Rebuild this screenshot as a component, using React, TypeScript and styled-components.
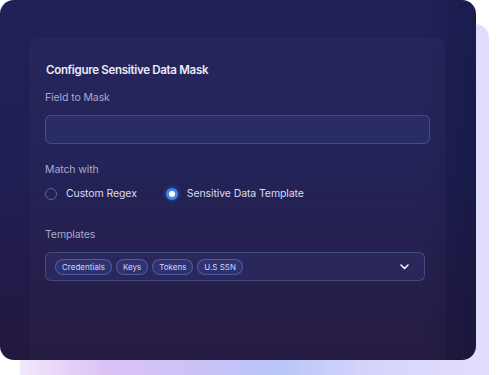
import styled, { createGlobalStyle } from 'styled-components'

const GlobalStyle = createGlobalStyle`
  html, body {
    margin: 0;
    padding: 0;
    background: #ffffff;
    font-family: Inter, "Noto Sans", sans-serif;
  }
`

const Page = styled.div`
  width: 500px;
  height: 375px;
  overflow: hidden;
  position: relative;
  background: #ffffff;
`

const Card = styled.div`
  position: relative;
  width: 476px;
  height: 360px;
  border-radius: 14px;
  background:
    linear-gradient(90deg, rgba(0, 0, 0, 0) 88%, rgba(10, 20, 50, 0.35) 100%),
    linear-gradient(180deg, #21215a 0%, #1f1f55 45%, #221a47 80%, #23183f 100%);
  display: flex;
  padding: 38px 31px 0 30px;
  box-sizing: border-box;

  &::before {
    content: '';
    position: absolute;
    left: 20px;
    top: 24px;
    width: 469px;
    height: 380px;
    border-radius: 14px;
    z-index: -1;
    background: linear-gradient(
      90deg,
      #f2e8fb 0%,
      #dcc2f5 18%,
      #c9c2f7 40%,
      #b9c6f8 55%,
      #d6d4fb 75%,
      #e2defc 100%
    );
  }
`

const Layer = styled.div`
  position: relative;
  z-index: 0;
`

const Panel = styled.div`
  flex: 1;
  border-radius: 10px 10px 0 0;
  background: linear-gradient(180deg, rgba(255, 255, 255, 0.025) 0%, rgba(255, 255, 255, 0.015) 100%);
  box-shadow: inset 0 0 0 1px rgba(255, 255, 255, 0.015);
  padding: 25px 15px 0 15px;
  display: flex;
  flex-direction: column;
`

const Title = styled.div`
  font-size: 11.5px;
  font-weight: 600;
  letter-spacing: -0.3px;
  color: #ebebf7;
  margin: 0 0 13px 1px;
  line-height: 15px;
`

const Label = styled.div`
  font-size: 10.5px;
  letter-spacing: -0.1px;
  color: #a9a9cc;
  line-height: 14px;
  margin-bottom: 10px;
`

const Input = styled.div<{ $right?: number }>`
  height: 29px;
  box-sizing: border-box;
  margin-right: ${p => p.$right ?? 0}px;
  border-radius: 6px;
  border: 1px solid rgba(140, 160, 230, 0.28);
  background: rgba(70, 90, 170, 0.16);
  display: flex;
  align-items: center;
  padding: 0 9px;
  gap: 4px;
`

const Section = styled.div<{ $top: number }>`
  margin-top: ${p => p.$top}px;
`

const RadioRow = styled.div`
  display: flex;
  align-items: center;
  gap: 29px;
  margin-top: 1px;
`

const RadioItem = styled.label`
  display: flex;
  align-items: center;
  gap: 9px;
  font-size: 10.5px;
  letter-spacing: -0.1px;
  color: #dcdcef;
`

const RadioDot = styled.span<{ $checked?: boolean }>`
  width: 12px;
  height: 12px;
  border-radius: 50%;
  box-sizing: border-box;
  border: ${p => (p.$checked ? '3.5px solid #3d86f0' : '1.5px solid #5267ad')};
  background: ${p => (p.$checked ? '#ffffff' : 'transparent')};
  box-shadow: ${p => (p.$checked ? '0 0 4px rgba(61, 134, 240, 0.6)' : 'none')};
`

const Chip = styled.span`
  font-size: 8px;
  color: #d4d8f0;
  height: 16px;
  line-height: 14px;
  box-sizing: border-box;
  padding: 0 6px;
  border-radius: 8px;
  border: 1px solid rgba(120, 140, 220, 0.45);
  background: rgba(60, 80, 170, 0.28);
`

const Chevron = styled.svg`
  margin-left: auto;
  margin-right: 6px;
`

const TEMPLATES = ['Credentials', 'Keys', 'Tokens', 'U.S SSN']

const App = () => {
  return (
    <Page>
      <GlobalStyle />
      <Layer>
        <Card>
          <Panel>
            <Title>Configure Sensitive Data Mask</Title>
            <Label>Field to Mask</Label>
            <Input />

            <Section $top={19}>
              <Label>Match with</Label>
              <RadioRow>
                <RadioItem>
                  <RadioDot />
                  Custom Regex
                </RadioItem>
                <RadioItem>
                  <RadioDot $checked />
                  Sensitive Data Template
                </RadioItem>
              </RadioRow>
            </Section>

            <Section $top={28}>
              <Label>Templates</Label>
              <Input $right={5}>
                {TEMPLATES.map(t => (
                  <Chip key={t}>{t}</Chip>
                ))}
                <Chevron width="9" height="6" viewBox="0 0 9 6">
                  <path d="M1 1l3.5 3.5L8 1" fill="none" stroke="#ffffff" strokeWidth="1.5" strokeLinecap="round" strokeLinejoin="round" />
                </Chevron>
              </Input>
            </Section>
          </Panel>
        </Card>
      </Layer>
    </Page>
  )
}

export default App
